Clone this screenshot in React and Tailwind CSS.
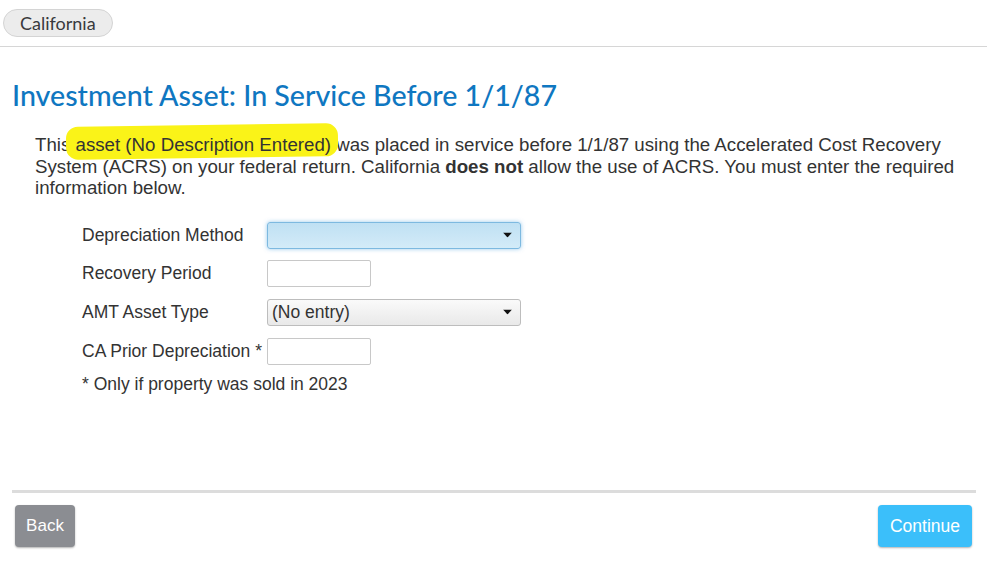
import React from "react";

const arial = { fontFamily: '"Liberation Sans", Arial, sans-serif' };

function Caret() {
  return (
    <svg width="9" height="5" viewBox="0 0 9 5" className="absolute right-[8px] top-1/2 -translate-y-1/2">
      <path d="M0 0 L9 0 L4.5 5 Z" fill="#111" />
    </svg>
  );
}

export default function App() {
  return (
    <div className="w-[987px] h-[563px] bg-white relative overflow-hidden text-[#333]">
      <div className="h-[47px] border-b border-[#d6d6d6] flex items-start pl-[3px] pt-[9px]">
        <div
          className="h-[28px] px-[16px] rounded-full bg-[#ececec] border border-[#d4d4d4] text-[18px] leading-[26px] text-[#393a3d]"
          style={{ fontFamily: '"Lato", "Open Sans", sans-serif' }}
        >
          California
        </div>
      </div>

      <h1
        className="pl-[12px] pt-[31px] text-[28.6px] leading-[34px] text-[#0f77c1] font-medium"
        style={{ fontFamily: '"Lato", "Open Sans", sans-serif' }}
      >
        Investment Asset: In Service Before 1/1/87
      </h1>

      <p className="pl-[35px] pr-[20px] pt-[22px] text-[18.7px] leading-[21.5px] text-[#333]" style={arial}>
        This{" "}
        <span className="relative inline-block">
          <span className="absolute left-[-10px] right-[-6px] top-[-9px] bottom-[-2px] bg-[#faf318] rounded-[12px] -rotate-[0.8deg]" />
          <span className="relative">asset (No Description Entered)</span>
        </span>{" "}
        was placed in service before 1/1/87 using the Accelerated Cost Recovery System (ACRS) on your federal return. California{" "}
        <b className="font-bold">does not</b> allow the use of ACRS. You must enter the required information below.
      </p>

      <div className="pl-[82px] pt-[23px] flex flex-col text-[17.5px] text-[#333]" style={arial}>
        <div className="flex items-center h-[27px]">
          <div className="w-[185px]">Depreciation Method</div>
          <div className="relative w-[254px] h-[27px] rounded-[3px] border border-[#7db9e0] bg-gradient-to-b from-[#bfe0f3] to-[#d3ebf8] shadow-[0_0_4px_rgba(110,180,230,0.7)]">
            <Caret />
          </div>
        </div>
        <div className="flex items-center h-[27px] mt-[11px]">
          <div className="w-[185px]">Recovery Period</div>
          <div className="w-[104px] h-[27px] rounded-[2px] border border-[#c8c8c8] bg-white" />
        </div>
        <div className="flex items-center h-[27px] mt-[12px]">
          <div className="w-[185px]">AMT Asset Type</div>
          <div className="relative w-[254px] h-[27px] rounded-[3px] border border-[#bdbdbd] bg-gradient-to-b from-[#fafafa] to-[#e9e9e9] pl-[4px] leading-[25px]">
            (No entry)
            <Caret />
          </div>
        </div>
        <div className="flex items-center h-[27px] mt-[12px]">
          <div className="w-[185px]">CA Prior Depreciation *</div>
          <div className="w-[104px] h-[27px] rounded-[2px] border border-[#c8c8c8] bg-white" />
        </div>
        <div className="mt-[7px] leading-[24px]">* Only if property was sold in 2023</div>
      </div>

      <div className="absolute left-[12px] right-[11px] top-[490px] h-[3px] bg-[#dcdcdc]" />

      <div className="absolute left-[15px] top-[505px]">
        <button
          className="h-[42px] w-[60px] rounded-[4px] bg-[#8b8d92] text-white text-[17px] shadow-[0_1px_2px_rgba(0,0,0,0.3)]"
          style={arial}
        >
          Back
        </button>
      </div>
      <div className="absolute right-[15px] top-[505px]">
        <button
          className="h-[42px] w-[94px] rounded-[4px] bg-[#3bbffa] text-white text-[17.5px] shadow-[0_1px_2px_rgba(0,0,0,0.3)]"
          style={arial}
        >
          Continue
        </button>
      </div>
    </div>
  );
}
